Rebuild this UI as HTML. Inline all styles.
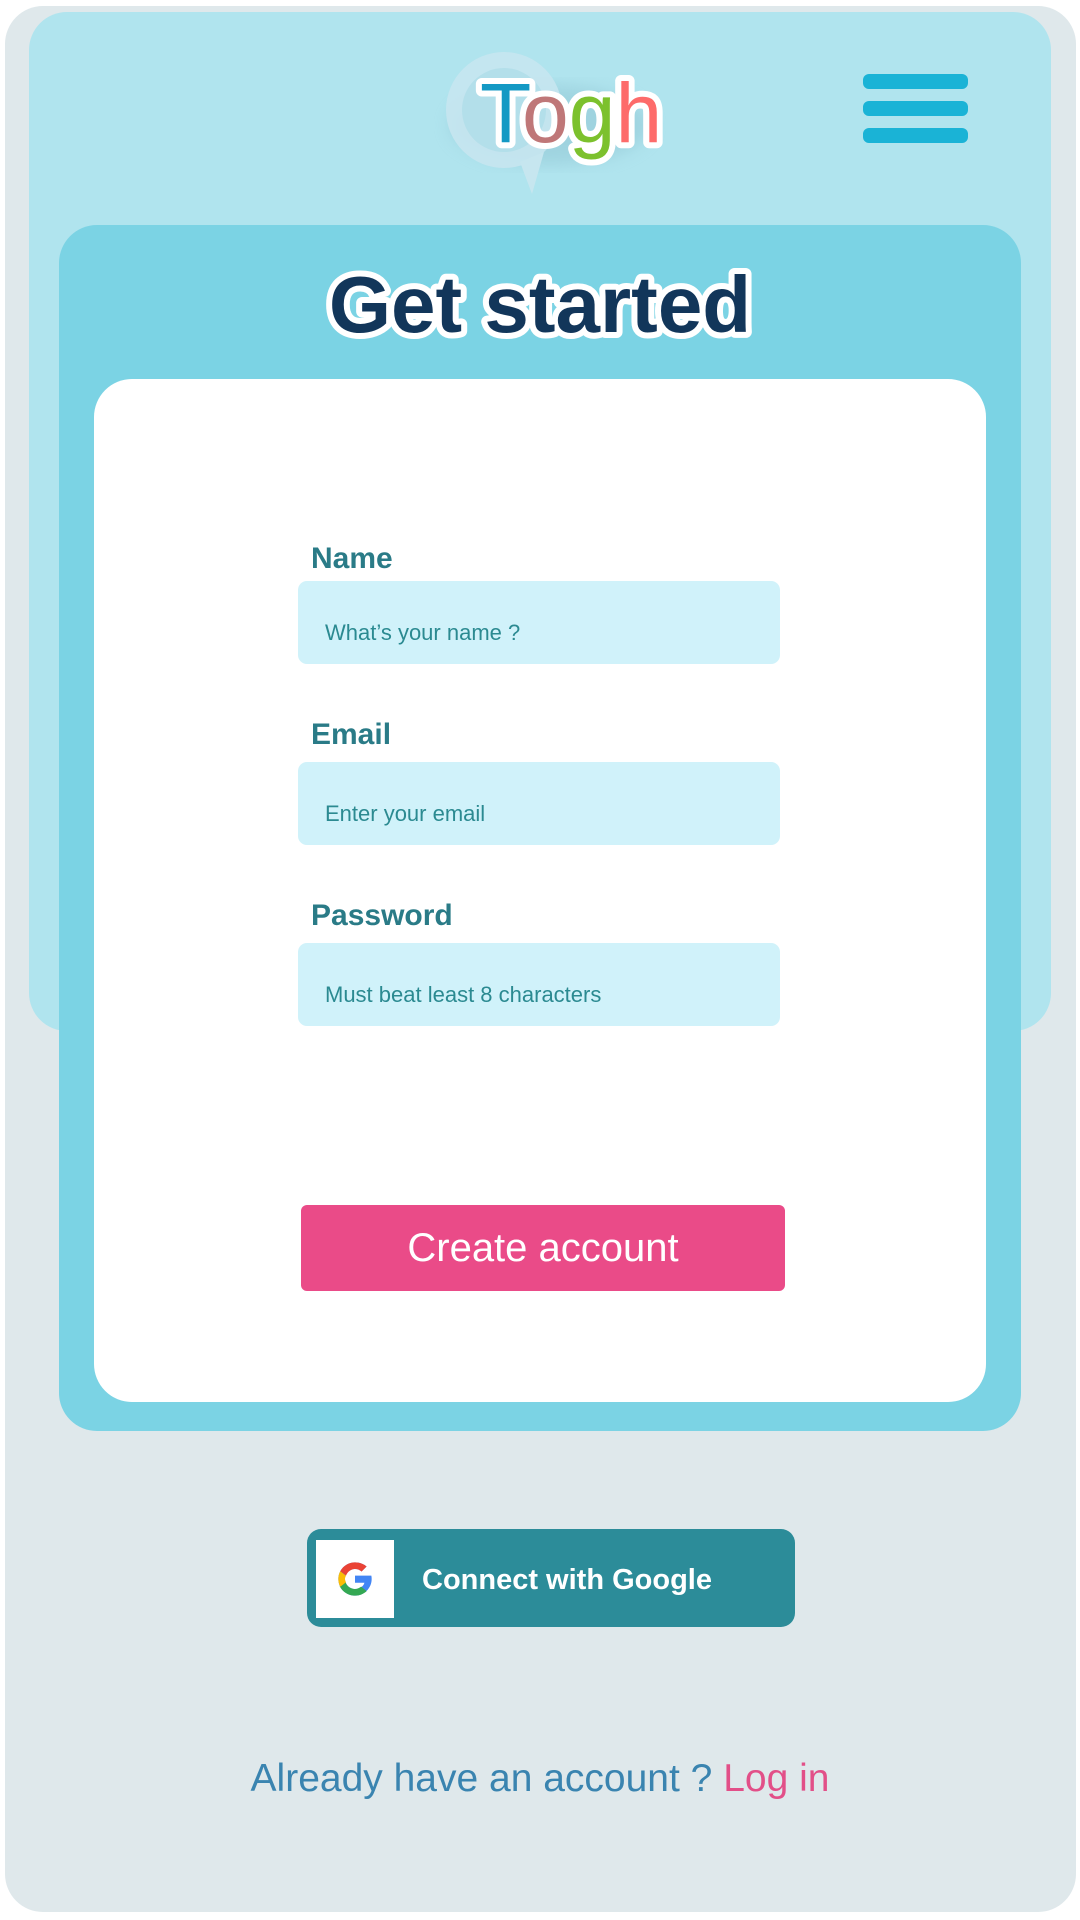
<!DOCTYPE html>
<html><head><meta charset="utf-8"><style>
*{margin:0;padding:0;box-sizing:border-box}
body{width:1080px;height:1920px;background:#fff;position:relative;overflow:hidden;font-family:"Liberation Sans",sans-serif}
.a{position:absolute}
.frame{left:5px;top:6px;width:1071px;height:1906px;background:#dfe8eb;border-radius:38px}
.top{left:29px;top:12px;width:1022px;height:1019px;background:#b0e4ee;border-radius:38px}
.bar{left:863px;width:105px;height:15px;background:#1ab3d6;border-radius:6px}
.card{left:59px;top:225px;width:962px;height:1206px;background:#7bd3e4;border-radius:38px}
.white{left:94px;top:379px;width:892px;height:1023px;background:#fff;border-radius:38px}
.lbl{left:311px;font-size:30px;font-weight:bold;color:#2a7b87}
.inp{left:298px;width:482px;height:83px;background:#d0f2fa;border-radius:9px;color:#2b8a91;font-size:22px;padding:39px 0 0 27px}
</style></head><body>
<div class="a frame"></div>
<div class="a top"></div>
<svg class="a" style="left:420px;top:30px" width="300" height="170">
<defs><filter id="s"><feGaussianBlur stdDeviation="8"/></filter></defs>
<ellipse cx="130" cy="95" rx="100" ry="40" fill="#8fc4d2" opacity=".5" filter="url(#s)"/>
<circle cx="84" cy="80" r="58" fill="#c6e6ef" opacity=".9"/>
<circle cx="84" cy="80" r="42" fill="#b3dfea"/>
<path d="M100 132 L112 164 L124 122 Z" fill="#c6e6ef"/>
<text x="60" y="112" font-family="Liberation Sans" font-size="84" stroke="#fff" stroke-width="12" stroke-linejoin="round" fill="#fff">Togh</text>
<text x="60" y="112" font-family="Liberation Sans" font-size="84"><tspan fill="#1499c4">T</tspan><tspan fill="#bf7778">o</tspan><tspan fill="#7cc12d">g</tspan><tspan fill="#fd6b6a">h</tspan></text>
</svg>
<div class="a bar" style="top:74px"></div>
<div class="a bar" style="top:101px"></div>
<div class="a bar" style="top:128px"></div>
<div class="a card"></div>
<svg class="a" style="left:0;top:240px" width="1080" height="120"><text x="540" y="92" text-anchor="middle" font-family="Liberation Sans" font-weight="bold" font-size="80" stroke="#fff" stroke-width="12" stroke-linejoin="round" fill="#fff">Get started</text><text x="540" y="92" text-anchor="middle" font-family="Liberation Sans" font-weight="bold" font-size="80" fill="#12365a">Get started</text></svg>
<div class="a white"></div>
<div class="a lbl" style="top:542px">Name</div>
<div class="a inp" style="top:581px">What’s your name ?</div>
<div class="a lbl" style="top:718px">Email</div>
<div class="a inp" style="top:762px">Enter your email</div>
<div class="a lbl" style="top:899px">Password</div>
<div class="a inp" style="top:943px">Must beat least 8 characters</div>
<div class="a" style="left:301px;top:1205px;width:484px;height:86px;background:#ea4b88;border-radius:6px;color:#fff;font-size:40px;text-align:center;line-height:86px">Create account</div>
<div class="a" style="left:307px;top:1529px;width:488px;height:98px;background:#2c8c99;border-radius:14px"></div>
<div class="a" style="left:316px;top:1540px;width:78px;height:78px;background:#fff"></div>
<svg class="a" style="left:335px;top:1559px" width="40" height="40" viewBox="0 0 48 48">
<path d="M43.6 20H24v8.5h11.3C34.2 33 29.6 36 24 36c-6.6 0-12-5.4-12-12s5.4-12 12-12c3 0 5.8 1.1 7.9 3l6-6C34.5 5.9 29.5 4 24 4 13 4 4 13 4 24s9 20 20 20 20-9 20-20c0-1.300-.1-2.700-.4-4z" fill="#4285f4"/>
<path d="M6.3 14.7l7 5.1C15.1 15.3 19.2 12 24 12c3 0 5.8 1.1 7.9 3l6-6C34.5 5.9 29.5 4 24 4 16.3 4 9.7 8.3 6.3 14.7z" fill="#ea4335"/>
<path d="M24 44c5.4 0 10.3-2 14-5.4l-6.6-5.5C29.4 34.6 26.8 36 24 36c-5.6 0-10.3-3.8-11.5-9l-7 5.4C8.9 39.4 15.9 44 24 44z" fill="#34a853"/>
<path d="M6.3 14.7C4.8 17.5 4 20.7 4 24s.8 6.5 2.3 9.3l7-5.4C12.4 26.7 12 25.4 12 24s.4-2.7 1.3-3.9z" fill="#fbbc05"/>
</svg>
<div class="a" style="left:422px;top:1564px;color:#fff;font-size:29px;font-weight:bold">Connect with Google</div>
<div class="a" style="left:0;width:1080px;top:1757px;text-align:center;font-size:39px;color:#3a84b0">Already have an account ? <span style="color:#e24f88">Log in</span></div>
</body></html>
